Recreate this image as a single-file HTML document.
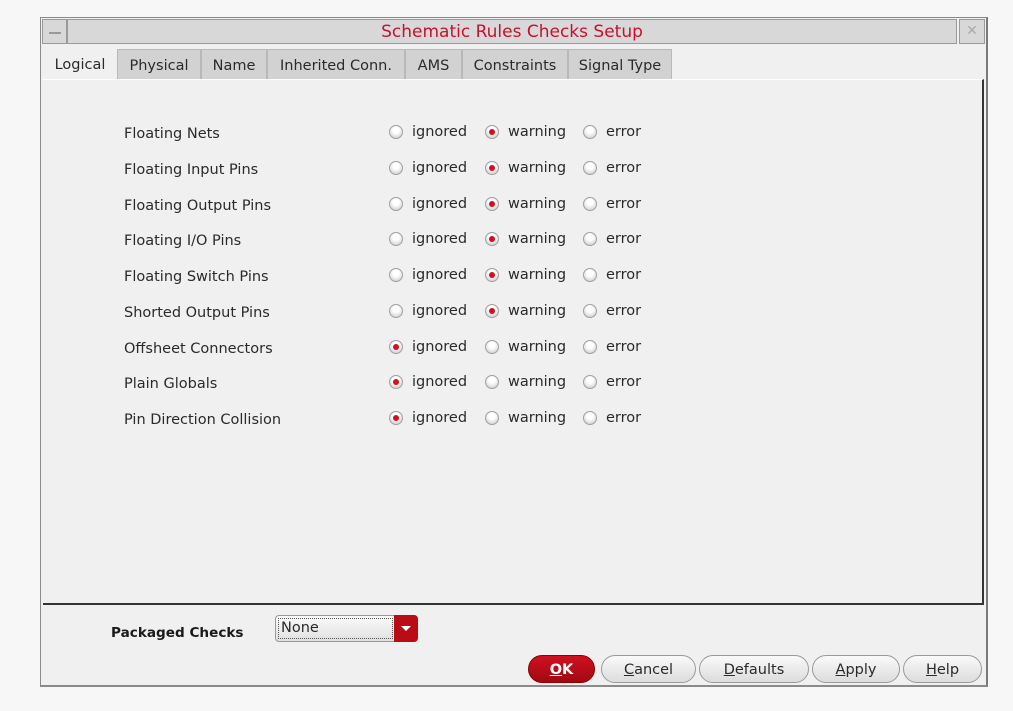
<!DOCTYPE html>
<html><head><meta charset="utf-8"><style>
*{margin:0;padding:0;box-sizing:border-box}
body{width:1013px;height:711px;background:#f7f7f7;position:relative;overflow:hidden;font-family:"DejaVu Sans","Liberation Sans",sans-serif;font-size:14px;color:#2a2a2a}
.a{position:absolute}
.win{left:40px;top:17px;width:948px;height:670px;background:#f0f0f0;border:1px solid #8a8a8a;border-right:2px solid #7a7a7a;border-bottom:2px solid #8a8a8a}
.title{left:1px;top:1px;width:914px;height:25px;background:#d8d8d8;border:1px solid #9a9a9a;text-align:center;color:#c8102e;font-size:17px;line-height:24px}
.tb{height:25px;background:#d8d8d8;border:1px solid #9a9a9a}
.tab{top:31px;height:30px;background:#d2d2d2;border:1px solid #b8b8b8;border-bottom:none;line-height:32px;text-align:center;font-size:14.5px}
.tab.act{background:#f0f0f0;border:none}
.panel{left:2px;top:61px;width:941px;height:526px;border-right:2px solid #333;border-bottom:2px solid #333;border-top:1px solid #fff}
.lbl{left:124px;font-size:14.5px}
.r{width:14px;height:14px;border-radius:50%;background:radial-gradient(circle at 50% 35%,#fff 30%,#ddd 70%,#bbb);border:1px solid #a0a0a0}
.r.on::after{content:"";position:absolute;left:3px;top:3px;width:6px;height:6px;border-radius:50%;background:#d0101a}
.t{font-size:14.5px}
.btn{top:655px;height:28px;border-radius:14px;border:1px solid #9a9a9a;background:linear-gradient(#fafafa,#dcdcdc);text-align:center;line-height:28px;font-size:14.5px}
u{text-decoration:underline}
</style></head><body>
<div class="a win">
  <div class="a tb" style="left:1px;top:1px;width:25px"><div class="a" style="left:6px;top:12px;width:12px;height:2px;background:#999"></div></div>
  <div class="a title" style="left:26px;width:890px">Schematic Rules Checks Setup</div>
  <div class="a tb" style="left:918px;top:1px;width:26px;color:#aaa;text-align:center;line-height:23px;font-size:14px">✕</div>
  <div class="a tab act" style="left:2px;width:74px">Logical</div>
  <div class="a tab" style="left:76px;width:84px">Physical</div>
  <div class="a tab" style="left:160px;width:66px">Name</div>
  <div class="a tab" style="left:226px;width:138px">Inherited Conn.</div>
  <div class="a tab" style="left:364px;width:57px">AMS</div>
  <div class="a tab" style="left:421px;width:106px">Constraints</div>
  <div class="a tab" style="left:527px;width:104px">Signal Type</div>
  <div class="a panel"></div>
</div>
<div id="rows"></div>
<div class="a" style="left:111px;top:625px;font-weight:bold;font-size:13.6px;color:#1a1a1a">Packaged Checks</div>
<div class="a" style="left:275px;top:615px;width:143px;height:27px;border-radius:4px;border:1px solid #999;background:linear-gradient(#fafafa,#e0e0e0)">
  <div class="a" style="left:2px;top:2px;width:115px;height:21px;border:1px dotted #555;line-height:19px;font-size:14.5px;padding-left:2px">None</div>
  <div class="a" style="left:118px;top:-1px;width:24px;height:27px;background:#b80d15;border-radius:0 4px 4px 0"><div class="a" style="left:7px;top:11px;width:0;height:0;border-left:5px solid transparent;border-right:5px solid transparent;border-top:5px solid #fff"></div></div>
</div>
<div class="a btn" style="left:528px;width:67px;background:linear-gradient(#d01020,#a00a12);border-color:#800;color:#fff;font-weight:bold"><u>O</u>K</div>
<div class="a btn" style="left:601px;width:95px"><u>C</u>ancel</div>
<div class="a btn" style="left:699px;width:110px"><u>D</u>efaults</div>
<div class="a btn" style="left:812px;width:88px"><u>A</u>pply</div>
<div class="a btn" style="left:903px;width:79px"><u>H</u>elp</div>
<script>
var L=["Floating Nets","Floating Input Pins","Floating Output Pins","Floating I/O Pins","Floating Switch Pins","Shorted Output Pins","Offsheet Connectors","Plain Globals","Pin Direction Collision"];
var s="";
for(var i=0;i<9;i++){var y=124+i*35.75;var sel=i<6?1:0;
s+='<div class="a lbl" style="top:'+(y+2)+'px">'+L[i]+'</div>';
var xs=[389,485,583],ts=["ignored","warning","error"],tx=[412,508,606];
for(var j=0;j<3;j++){s+='<div class="a r'+(j==sel?' on':'')+'" style="left:'+xs[j]+'px;top:'+(y+1)+'px"></div><div class="a t" style="left:'+tx[j]+'px;top:'+(y)+'px">'+ts[j]+'</div>';}}
document.getElementById("rows").innerHTML=s;
</script>
</body></html>
